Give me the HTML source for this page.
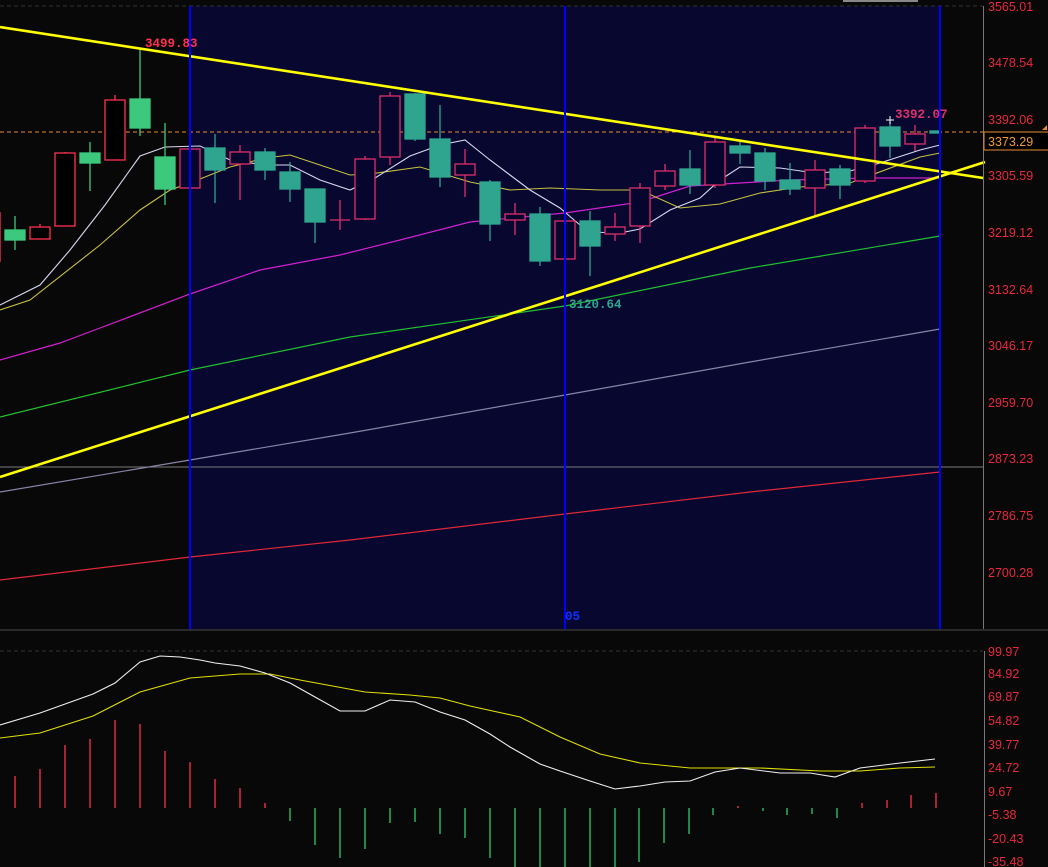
<!DOCTYPE html>
<html><head><meta charset="utf-8"><style>
html,body{margin:0;padding:0;background:#080808;}
svg{display:block;}
text{font-family:"Liberation Sans",sans-serif;font-size:12.5px;}
.m{font-family:"Liberation Mono",monospace;font-size:12.5px;font-weight:bold;}
</style></head><body>
<svg width="1048" height="867" viewBox="0 0 1048 867" xmlns="http://www.w3.org/2000/svg">
<rect width="1048" height="867" fill="#080808"/>
<rect x="190" y="6" width="750" height="623" fill="#07072f"/>
<rect x="843" y="0" width="75" height="2" fill="#888"/>
<line x1="0" y1="6" x2="983" y2="6" stroke="#333" stroke-dasharray="4,3"/>
<!-- MA long lines -->
<line x1="0" y1="467" x2="983" y2="467" stroke="#7a7a7a" stroke-width="1"/>
<polyline fill="none" stroke="#e02838" stroke-width="1.2" points="0,580 190,557 350,540 565,514 750,492 940,472"/>
<polyline fill="none" stroke="#8a84a8" stroke-width="1.2" points="0,492 190,460 350,433 565,395 750,362 940,329"/>
<polyline fill="none" stroke="#20c030" stroke-width="1.2" points="0,417 190,370 350,337 565,306 750,268 940,236"/>
<polyline fill="none" stroke="#d020d0" stroke-width="1.2" points="0,360 60,343 100,328 190,294 260,270 340,255 400,240 470,222 565,213 640,202 690,186 790,180 870,178 940,178"/>
<polyline fill="none" stroke="#c8c040" stroke-width="1.1" points="0,310 30,300 100,245 140,210 170,190 190,183 230,167 265,158 290,155 320,165 350,175 370,174 420,167 470,182 510,190 550,188 600,190 640,190 680,208 720,204 760,193 800,187 850,183 920,157 940,153"/>
<polyline fill="none" stroke="#d8d8f0" stroke-width="1.1" points="0,305 40,285 70,250 105,205 140,156 165,147 200,146 230,160 265,165 290,165 320,180 350,190 375,178 410,156 440,145 465,140 490,160 530,190 560,208 580,225 590,232 620,233 640,229 670,210 700,198 720,180 740,167 780,168 815,173 850,171 880,163 920,150 940,145"/>
<!-- orange dashed -->
<line x1="0" y1="132" x2="983" y2="132" stroke="#e88a30" stroke-dasharray="4,3"/>
<!-- candles -->
<g stroke-width="1.3">
<g stroke="#3cc97e" fill="#3cc97e">
<line x1="15" y1="216" x2="15" y2="250"/><rect x="5" y="230" width="20" height="10"/>
<line x1="90" y1="142" x2="90" y2="191"/><rect x="80" y="153" width="20" height="10"/>
<line x1="140" y1="49" x2="140" y2="136"/><rect x="130" y="99" width="20" height="29"/>
<line x1="165" y1="123" x2="165" y2="205"/><rect x="155" y="157" width="20" height="32"/>
</g>
<g stroke="#ff3050" fill="#000">
<line x1="40" y1="224" x2="40" y2="228"/><rect x="30" y="227" width="20" height="12"/>
<line x1="65" y1="152" x2="65" y2="154"/><rect x="55" y="153" width="20" height="73"/>
<line x1="115" y1="95" x2="115" y2="100"/><rect x="105" y="100" width="20" height="60"/>
<line x1="0" y1="212" x2="0" y2="262"/>
</g>
<g stroke="#2fa58f" fill="#2fa58f">
<line x1="215" y1="134" x2="215" y2="203"/><rect x="205" y="148" width="20" height="22"/>
<line x1="265" y1="148" x2="265" y2="180"/><rect x="255" y="152" width="20" height="18"/>
<line x1="290" y1="162" x2="290" y2="202"/><rect x="280" y="172" width="20" height="17"/>
<line x1="315" y1="189" x2="315" y2="243"/><rect x="305" y="189" width="20" height="33"/>
<line x1="415" y1="93" x2="415" y2="141"/><rect x="405" y="94" width="20" height="45"/>
<line x1="440" y1="105" x2="440" y2="187"/><rect x="430" y="139" width="20" height="38"/>
<line x1="490" y1="180" x2="490" y2="241"/><rect x="480" y="182" width="20" height="42"/>
<line x1="540" y1="207" x2="540" y2="266"/><rect x="530" y="214" width="20" height="47"/>
<line x1="590" y1="211" x2="590" y2="276"/><rect x="580" y="221" width="20" height="25"/>
<line x1="690" y1="150" x2="690" y2="194"/><rect x="680" y="169" width="20" height="16"/>
<line x1="740" y1="142" x2="740" y2="164"/><rect x="730" y="146" width="20" height="7"/>
<line x1="765" y1="148" x2="765" y2="190"/><rect x="755" y="153" width="20" height="28"/>
<line x1="790" y1="163" x2="790" y2="195"/><rect x="780" y="180" width="20" height="9"/>
<line x1="840" y1="165" x2="840" y2="199"/><rect x="830" y="169" width="20" height="16"/>
<line x1="890" y1="122" x2="890" y2="158"/><rect x="880" y="127" width="20" height="19"/>
<rect x="930" y="131" width="10" height="2"/>
</g>
<g stroke="#e0306a" fill="#05052e">
<rect x="180" y="149" width="20" height="39"/>
<line x1="240" y1="145" x2="240" y2="200"/><rect x="230" y="152" width="20" height="12"/>
<line x1="340" y1="200" x2="340" y2="230"/><line x1="330" y1="220" x2="350" y2="220"/>
<line x1="365" y1="156" x2="365" y2="220"/><rect x="355" y="159" width="20" height="60"/>
<line x1="390" y1="92" x2="390" y2="165"/><rect x="380" y="96" width="20" height="61"/>
<line x1="465" y1="149" x2="465" y2="197"/><rect x="455" y="164" width="20" height="11"/>
<line x1="515" y1="203" x2="515" y2="235"/><rect x="505" y="214" width="20" height="6"/>
<rect x="555" y="221" width="20" height="38"/>
<line x1="615" y1="213" x2="615" y2="241"/><rect x="605" y="227" width="20" height="7"/>
<line x1="640" y1="183" x2="640" y2="243"/><rect x="630" y="188" width="20" height="38"/>
<line x1="665" y1="164" x2="665" y2="190"/><rect x="655" y="171" width="20" height="15"/>
<line x1="715" y1="138" x2="715" y2="188"/><rect x="705" y="142" width="20" height="43"/>
<line x1="815" y1="160" x2="815" y2="215"/><rect x="805" y="170" width="20" height="18"/>
<line x1="865" y1="125" x2="865" y2="183"/><rect x="855" y="128" width="20" height="53"/>
<line x1="915" y1="125" x2="915" y2="151"/><rect x="905" y="134" width="20" height="10"/>
</g>
</g>
<path d="M886 120h8M890 116v8" stroke="#fff" stroke-width="1"/>
<!-- trend lines -->
<line x1="0" y1="27" x2="983" y2="178" stroke="#ffff00" stroke-width="2.6"/>
<line x1="0" y1="477" x2="985" y2="162" stroke="#ffff00" stroke-width="2.6"/>
<!-- vertical blue -->
<rect x="189" y="6" width="2" height="623" fill="#0000ff"/>
<rect x="564" y="6" width="2" height="623" fill="#0000ff"/>
<rect x="939" y="6" width="2" height="623" fill="#0000ff"/>
<text class="m" x="145" y="47" fill="#ff3050">3499.83</text>
<text class="m" x="895" y="118" fill="#e0306a">3392.07</text>
<text class="m" x="569" y="308" fill="#2fa58f">3120.64</text>
<text class="m" x="565" y="620" fill="#1030ff" font-size="11">05</text>
<!-- axis -->
<line x1="983.5" y1="6" x2="983.5" y2="629" stroke="#777"/>
<g fill="#e8283c">
<text x="988" y="11">3565.01</text>
<text x="988" y="67">3478.54</text>
<text x="988" y="124">3392.06</text>
<text x="988" y="180">3305.59</text>
<text x="988" y="237">3219.12</text>
<text x="988" y="294">3132.64</text>
<text x="988" y="350">3046.17</text>
<text x="988" y="407">2959.70</text>
<text x="988" y="463">2873.23</text>
<text x="988" y="520">2786.75</text>
<text x="988" y="577">2700.28</text>
</g>
<rect x="984" y="132" width="66" height="18" fill="#000" stroke="#e88a30"/>
<text x="988" y="146" fill="#f09a30">3373.29</text>
<path d="M1042 130l5-5v5z" fill="#e88a30"/>
<!-- separator -->
<line x1="0" y1="630" x2="1048" y2="630" stroke="#2a2a2a" stroke-width="2"/>
<line x1="0" y1="651" x2="983" y2="651" stroke="#333" stroke-dasharray="4,3"/>
<line x1="984.5" y1="651" x2="984.5" y2="867" stroke="#777"/>
<g fill="#e8283c">
<text x="988" y="656">99.97</text>
<text x="988" y="678">84.92</text>
<text x="988" y="701">69.87</text>
<text x="988" y="725">54.82</text>
<text x="988" y="749">39.77</text>
<text x="988" y="772">24.72</text>
<text x="988" y="796">9.67</text>
<text x="988" y="819">-5.38</text>
<text x="988" y="843">-20.43</text>
<text x="988" y="866">-35.48</text>
</g>
<!-- MACD bars -->
<g stroke="#ff3050" stroke-width="1.3">
<line x1="15" y1="776" x2="15" y2="808"/><line x1="40" y1="769" x2="40" y2="808"/><line x1="65" y1="745" x2="65" y2="808"/><line x1="90" y1="739" x2="90" y2="808"/><line x1="115" y1="720" x2="115" y2="808"/><line x1="140" y1="724" x2="140" y2="808"/><line x1="165" y1="751" x2="165" y2="808"/><line x1="190" y1="762" x2="190" y2="808"/><line x1="215" y1="779" x2="215" y2="808"/><line x1="240" y1="788" x2="240" y2="808"/><line x1="265" y1="803" x2="265" y2="808"/>
<line x1="738" y1="806" x2="738" y2="808"/><line x1="862" y1="803" x2="862" y2="808"/><line x1="887" y1="800" x2="887" y2="808"/><line x1="911" y1="795" x2="911" y2="808"/><line x1="936" y1="793" x2="936" y2="808"/>
</g>
<g stroke="#2ecc71" stroke-width="1.3">
<line x1="290" y1="808" x2="290" y2="821"/><line x1="315" y1="808" x2="315" y2="845"/><line x1="340" y1="808" x2="340" y2="858"/><line x1="365" y1="808" x2="365" y2="849"/><line x1="390" y1="808" x2="390" y2="823"/><line x1="415" y1="808" x2="415" y2="822"/><line x1="440" y1="808" x2="440" y2="834"/><line x1="465" y1="808" x2="465" y2="838"/><line x1="490" y1="808" x2="490" y2="858"/><line x1="515" y1="808" x2="515" y2="867"/><line x1="540" y1="808" x2="540" y2="867"/><line x1="565" y1="808" x2="565" y2="867"/><line x1="590" y1="808" x2="590" y2="867"/><line x1="615" y1="808" x2="615" y2="867"/><line x1="639" y1="808" x2="639" y2="862"/><line x1="664" y1="808" x2="664" y2="843"/><line x1="689" y1="808" x2="689" y2="834"/><line x1="713" y1="808" x2="713" y2="815"/><line x1="763" y1="808" x2="763" y2="811"/><line x1="787" y1="808" x2="787" y2="815"/><line x1="812" y1="808" x2="812" y2="814"/><line x1="837" y1="808" x2="837" y2="818"/>
</g>
<polyline fill="none" stroke="#e0e000" stroke-width="1.1" points="0,738 40,733 93,716 140,692 190,678 240,674 270,674 300,680 365,692 410,695 440,698 470,706 520,717 560,737 600,754 640,763 690,768 760,768 820,771 860,771 900,768 935,767"/>
<polyline fill="none" stroke="#f0f0f0" stroke-width="1.1" points="0,725 40,713 93,694 115,683 140,662 160,656 180,657 200,660 215,663 240,666 265,673 290,683 315,697 340,711 365,711 390,700 415,702 440,712 465,720 490,734 510,747 540,764 560,771 590,781 615,789 640,786 665,782 690,781 715,772 740,768 780,773 810,773 835,777 860,768 900,763 935,759"/>
</svg>
</body></html>
